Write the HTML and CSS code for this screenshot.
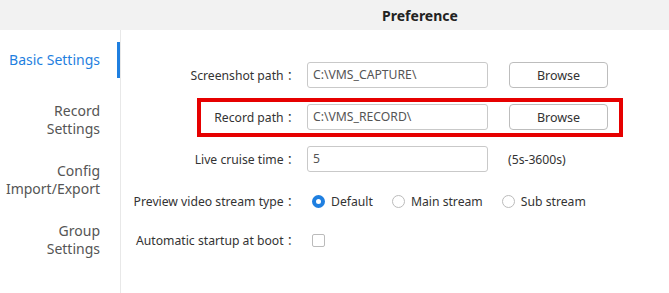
FILE: index.html
```html
<!DOCTYPE html>
<html lang="en">

<head>
    <meta charset="UTF-8">
    <title>Preference</title>
    <link rel="stylesheet" href="styles.css">
</head>

<body>
    <div id="header">
        <h1>Preference</h1>
    </div>
    <div id="main">
        <div id="sidebar">
            <div class="nav-item active">Basic Settings</div>
            <div class="nav-item">Record<br>Settings</div>
            <div class="nav-item">Config<br>Import/Export</div>
            <div class="nav-item">Group<br>Settings</div>
        </div>
        <div id="contents">
            <div class="row">
                <label class="label">Screenshot path ：</label>
                <div class="input">C:\VMS_CAPTURE\</div>
                <button class="browse">Browse</button>
            </div>
            <div class="row highlight">
                <label class="label">Record path ：</label>
                <div class="input">C:\VMS_RECORD\</div>
                <button class="browse">Browse</button>
            </div>
            <div class="row">
                <label class="label">Live cruise time ：</label>
                <div class="input">5</div>
                <span class="hint">(5s-3600s)</span>
            </div>
            <div class="row">
                <label class="label">Preview video stream type ：</label>
                <div class="radio-group">
                    <span class="radio checked"></span><span class="radio-text">Default</span>
                    <span class="radio"></span><span class="radio-text">Main stream</span>
                    <span class="radio"></span><span class="radio-text">Sub stream</span>
                </div>
            </div>
            <div class="row small">
                <label class="label">Automatic startup at boot ：</label>
                <span class="checkbox"></span>
            </div>
        </div>
    </div>
</body>

</html>
```

FILE: styles.css
```css
body {
    margin: 0;
    font-family: "Noto Sans", "Noto Sans CJK SC", sans-serif;
    background-color: #fff;
    color: #333;
}

#header {
    height: 30px;
    background-color: #f2f2f2;
    display: flex;
    align-items: center;
    justify-content: center;
    padding-left: 171px;
}

#header h1 {
    margin: 0;
    font-size: 14px;
    font-weight: bold;
    color: #222;
}

#main {
    display: flex;
    height: 263px;
}

#sidebar {
    width: 120px;
    border-right: 1px solid #e8e8e8;
}

.nav-item {
    position: relative;
    height: 60px;
    display: flex;
    align-items: center;
    justify-content: flex-end;
    text-align: right;
    padding-right: 20px;
    font-size: 14px;
    line-height: 18px;
    color: #555;
}

.nav-item.active {
    color: #1f7fe0;
}

.nav-item.active::after {
    content: "";
    position: absolute;
    right: 0;
    top: 12px;
    bottom: 12px;
    width: 3px;
    background: #1f7fe0;
}

#contents {
    flex: 1;
    display: flex;
    flex-direction: column;
    gap: 16px;
    padding-top: 32px;
    font-size: 12.2px;
}

.row {
    position: relative;
    display: flex;
    align-items: center;
    height: 26px;
}

.row.small {
    height: 20px;
}

.highlight::before {
    content: "";
    position: absolute;
    left: 76px;
    top: -6px;
    width: 426px;
    height: 39px;
    border: 4px solid #e60000;
    box-sizing: border-box;
}

.label {
    width: 178px;
    margin-right: 8px;
    text-align: right;
    color: #333;
    white-space: nowrap;
}

.input {
    width: 181px;
    height: 26px;
    box-sizing: border-box;
    border: 1px solid #c9c9c9;
    border-radius: 3px;
    padding-left: 5px;
    line-height: 24px;
    color: #555;
}

.browse {
    margin-left: 21px;
    width: 99px;
    height: 26px;
    border: 1px solid #bdbdbd;
    border-radius: 4px;
    background: #fff;
    font-family: inherit;
    font-size: 12.5px;
    color: #333;
    padding: 0;
}

.hint {
    margin-left: 20px;
    color: #333;
}

.radio-group {
    display: flex;
    align-items: center;
    padding-left: 5px;
}

.radio {
    width: 13px;
    height: 13px;
    box-sizing: border-box;
    border: 1px solid #bbb;
    border-radius: 50%;
}

.radio.checked {
    border: 4px solid #1f7fe0;
}

.radio-text {
    margin-left: 6px;
    margin-right: 19px;
}

.checkbox {
    margin-left: 5px;
    width: 13px;
    height: 13px;
    box-sizing: border-box;
    border: 1px solid #bbb;
    border-radius: 2px;
}
```
